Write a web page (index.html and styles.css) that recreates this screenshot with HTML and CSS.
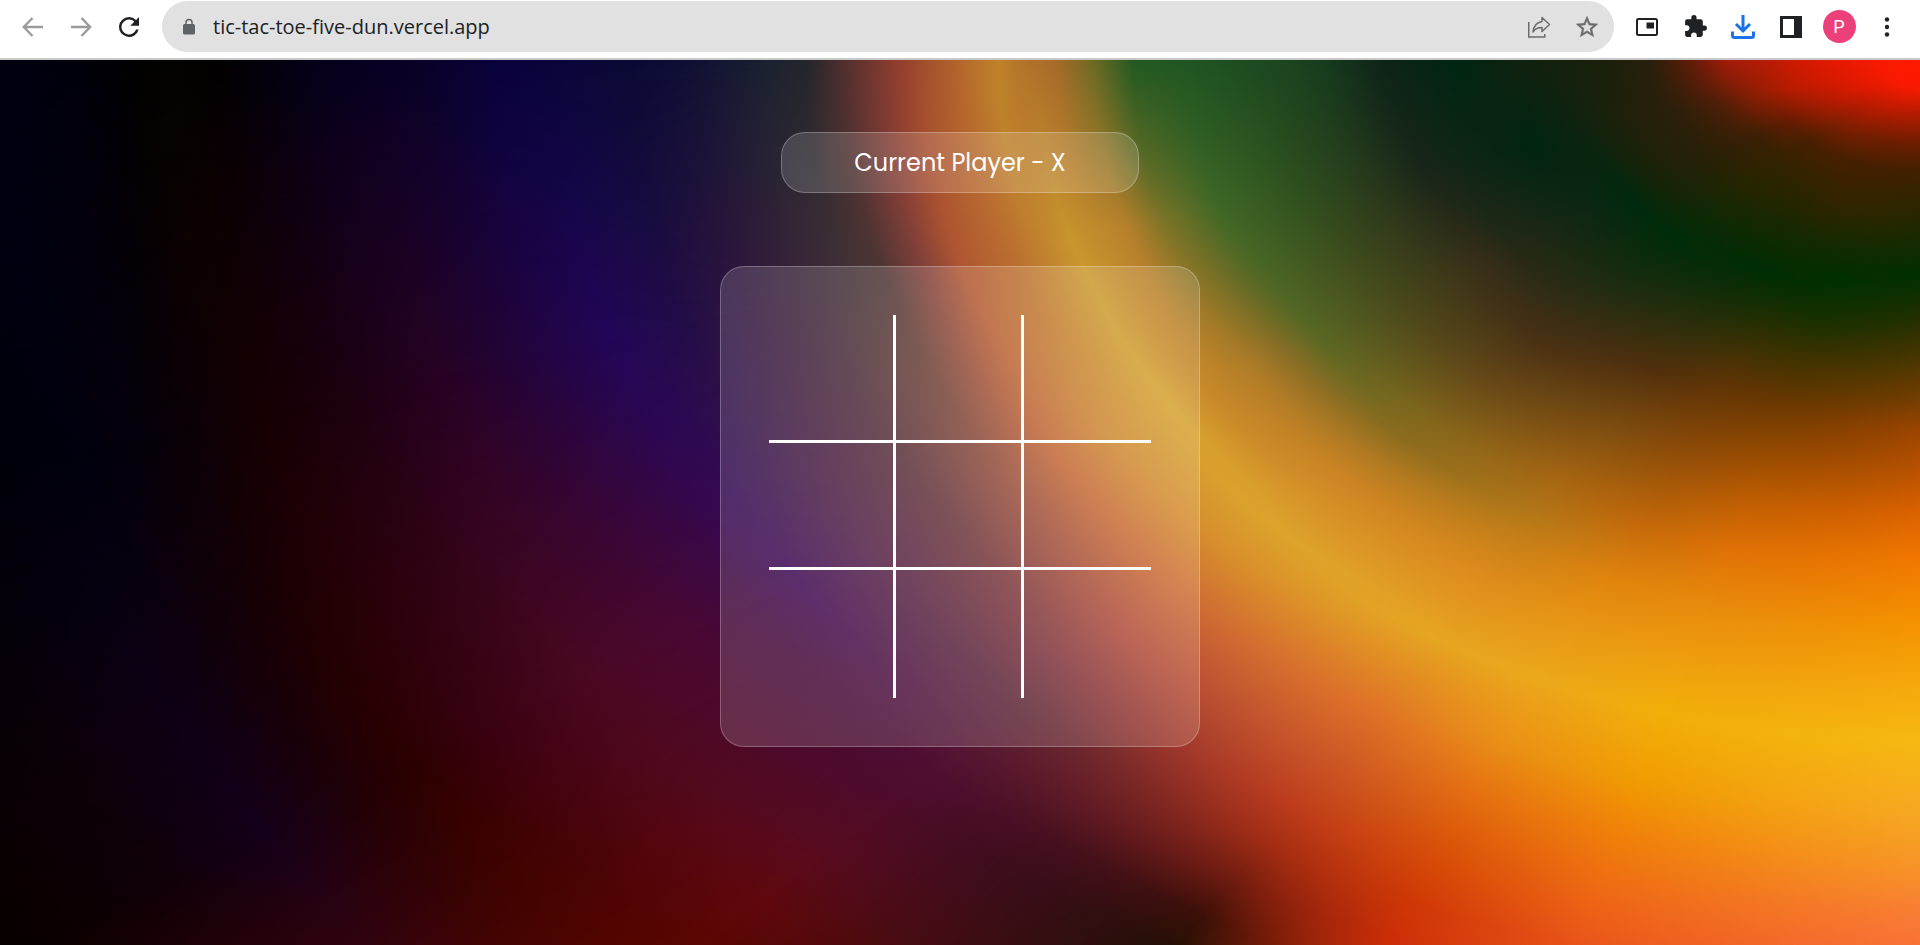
FILE: index.html
```html
<!DOCTYPE html>
<html lang="en">
<head>
<meta charset="utf-8">
<meta name="viewport" content="width=device-width, initial-scale=1">
<title>Tic Tac Toe</title>
<link rel="stylesheet" href="styles.css">
</head>
<body>
<header class="toolbar">
  <nav class="nav-buttons" aria-label="Navigation">
    <button class="tool tool-muted" type="button" aria-label="Back">
      <svg width="24" height="24" viewBox="0 0 24 24" fill="none" stroke="currentColor" stroke-width="2.400"><path d="M22 12H3.500M11.500 3 2.800 12l8.700 9"/></svg>
    </button>
    <button class="tool tool-muted" type="button" aria-label="Forward">
      <svg width="24" height="24" viewBox="0 0 24 24" fill="none" stroke="currentColor" stroke-width="2.400"><path d="M2 12h18.500M12.500 3l8.700 9-8.700 9"/></svg>
    </button>
    <button class="tool" type="button" aria-label="Reload">
      <svg width="30" height="30" viewBox="0 0 24 24" fill="currentColor"><path d="M17.650 6.350A7.960 7.960 0 0 0 12 4a8 8 0 1 0 7.730 10h-2.080A6 6 0 1 1 12 6c1.660 0 3.140.690 4.220 1.780L13 11h7V4z"/></svg>
    </button>
  </nav>
  <div class="address">
    <svg class="lock" width="18" height="18" viewBox="0 0 24 24" fill="currentColor" aria-hidden="true"><path fill-rule="evenodd" d="M18 8h-1V6A5 5 0 0 0 7 6v2H6a2 2 0 0 0-2 2v10c0 1.100.900 2 2 2h12a2 2 0 0 0 2-2V10a2 2 0 0 0-2-2zM8.900 8V6a3.100 3.100 0 0 1 6.200 0v2z"/></svg>
    <input class="url" type="text" value="tic-tac-toe-five-dun.vercel.app" aria-label="Address">
    <button class="tool tool-grey" type="button" aria-label="Share">
      <svg width="24" height="24" viewBox="0 0 24 24" fill="none" stroke="currentColor" stroke-width="1.500"><path d="M1.750 7v15h16v-3"/><path stroke-linejoin="round" d="M15 2.500 22.500 9.500 15 16.500v-4C11 12.300 8 14 6 17c.5-5.500 3.500-9.500 9-10.500z"/></svg>
    </button>
    <button class="tool tool-grey" type="button" aria-label="Bookmark">
      <svg width="26" height="26" viewBox="0 0 24 24" fill="currentColor" stroke="currentColor" stroke-width=".4"><path d="m22 9.240-7.190-.620L12 2 9.190 8.630 2 9.240l5.460 4.730L5.820 21 12 17.270 18.180 21l-1.630-7.030zM12 15.400l-3.760 2.270 1-4.280-3.320-2.880 4.380-.380L12 6.100l1.710 4.040 4.380.380-3.320 2.880 1 4.280z"/></svg>
    </button>
  </div>
  <div class="actions">
    <button class="tool" type="button" aria-label="Picture in picture">
      <svg width="24" height="24" viewBox="0 0 24 24"><rect x="2" y="4" width="20" height="16" rx="1.500" fill="none" stroke="currentColor" stroke-width="2"/><path fill="currentColor" d="M11.500 7.500h7.500v6h-7.500z"/></svg>
    </button>
    <button class="tool" type="button" aria-label="Extensions">
      <svg width="25" height="25" viewBox="0 0 24 24" fill="currentColor"><path d="M20.500 11H19V7a2 2 0 0 0-2-2h-4V3.500a2.500 2.500 0 0 0-5 0V5H4a2 2 0 0 0-1.990 2v3.800H3.500a2.700 2.700 0 0 1 0 5.400H2V20c0 1.100.900 2 2 2h3.800v-1.500a2.700 2.700 0 0 1 5.400 0V22H17a2 2 0 0 0 2-2v-4h1.500a2.500 2.500 0 0 0 0-5z"/></svg>
    </button>
    <button class="tool tool-blue" type="button" aria-label="Downloads">
      <svg width="26" height="26" viewBox="0 0 26 26" fill="none" stroke="currentColor" stroke-width="3"><path d="M13 1v16M6 10l7 7 7-7"/><path d="M2.500 17.500v4a2 2 0 0 0 2 2h17a2 2 0 0 0 2-2v-4"/></svg>
    </button>
    <button class="tool" type="button" aria-label="Side panel">
      <svg width="22" height="22" viewBox="0 0 22 22"><path fill="currentColor" fill-rule="evenodd" d="M0 0h22v22H0zM3 3v16h11V3z"/></svg>
    </button>
    <button class="tool" type="button" aria-label="Profile"><span class="avatar">P</span></button>
    <button class="tool" type="button" aria-label="Menu">
      <svg width="6" height="20" viewBox="0 0 6 20" fill="currentColor"><circle cx="3" cy="2.500" r="2.200"/><circle cx="3" cy="10" r="2.200"/><circle cx="3" cy="17.500" r="2.200"/></svg>
    </button>
  </div>
</header>
<main class="stage">
  <div class="backdrop" aria-hidden="true">
    <div class="glow glow-a"></div>
    <div class="glow glow-b"></div>
    <div class="glow glow-c"></div>
    <div class="glow glow-d"></div>
    <div class="glow glow-e"></div>
    <div class="glow glow-f"></div>
    <div class="glow glow-g"></div>
    <div class="glow glow-h"></div>
  </div>
  <div class="game">
    <p class="status">Current Player - X</p>
    <div class="board">
      <div class="cells">
        <button class="cell" type="button" aria-label="Top left"></button>
        <button class="cell" type="button" aria-label="Top centre"></button>
        <button class="cell" type="button" aria-label="Top right"></button>
        <button class="cell" type="button" aria-label="Middle left"></button>
        <button class="cell" type="button" aria-label="Middle"></button>
        <button class="cell" type="button" aria-label="Middle right"></button>
        <button class="cell" type="button" aria-label="Bottom left"></button>
        <button class="cell" type="button" aria-label="Bottom centre"></button>
        <button class="cell" type="button" aria-label="Bottom right"></button>
      </div>
    </div>
  </div>
</main>
</body>
</html>
```
FILE: styles.css
```css
* {
  box-sizing: border-box;
}

body {
  margin: 0;
  min-height: 100vh;
  display: flex;
  flex-direction: column;
  font-family: "Open Sans", "Noto Sans", sans-serif;
}

button {
  padding: 0;
  border: 0;
  background: none;
  color: inherit;
  font: inherit;
}

/* Browser toolbar */
.toolbar {
  display: flex;
  align-items: flex-start;
  height: 60px;
  padding-top: 1px;
  background: #fff;
  border-bottom: 2px solid #c8c8c8;
  color: #202124;
}

.nav-buttons,
.actions {
  display: flex;
  align-items: center;
  height: 51px;
}

.nav-buttons {
  padding: 0 9px;
}

.actions {
  padding: 0 9px;
}

.tool {
  display: flex;
  align-items: center;
  justify-content: center;
  flex: none;
  width: 48px;
  height: 48px;
}

.tool-muted {
  color: #9b9b9b;
}

.tool-grey {
  color: #6b6c6e;
}

.tool-blue {
  color: #1a73e8;
}

.address {
  display: flex;
  align-items: center;
  flex: 1;
  height: 51px;
  padding: 0 3px 0 18px;
  border-radius: 26px;
  background: #e1e1e1;
}

.lock {
  flex: none;
  margin-right: 15px;
  color: #5f6368;
}

.url {
  flex: 1;
  min-width: 0;
  padding: 0;
  border: 0;
  outline: 0;
  background: none;
  color: #202124;
  font-family: "Open Sans", "Noto Sans", sans-serif;
  font-size: 20px;
  line-height: 28px;
}

.avatar {
  width: 33px;
  height: 33px;
  border-radius: 50%;
  background: #ec407a;
  color: #fff;
  font-family: Roboto, sans-serif;
  font-size: 18px;
  line-height: 33px;
  text-align: center;
}

/* Game */
.stage {
  flex: 1;
  display: grid;
}

.backdrop,
.game {
  grid-area: 1 / 1;
}

.game {
  display: flex;
  flex-direction: column;
  align-items: center;
  gap: 73px;
  padding: 72px 16px;
  z-index: 1;
}

.status {
  width: 358px;
  max-width: 100%;
  margin: 0;
  padding: 12px;
  border: 1px solid rgba(255, 255, 255, 0.25);
  border-radius: 24px;
  background: rgba(255, 255, 255, 0.15);
  color: #fff;
  font-family: Poppins, Inter, sans-serif;
  font-size: 24px;
  line-height: 35px;
  text-align: center;
}

.board {
  width: 480px;
  max-width: 100%;
  padding: 48px;
  border: 1px solid rgba(255, 255, 255, 0.25);
  border-radius: 24px;
  background: rgba(255, 255, 255, 0.15);
}

.cells {
  display: grid;
  grid-template-columns: repeat(3, 1fr);
  grid-auto-rows: 128px 127px 128px;
}

.cell {
  border: 0 solid #fff;
}

.cell:not(:nth-child(3n)) {
  border-right-width: 3px;
}

.cell:nth-child(-n + 6) {
  border-bottom-width: 3px;
}

/* Elliptical glows around the top right corner, each one fading
   into the next as the angle turns from left to down. */
.backdrop {
  display: grid;
  overflow: hidden;
  background: #000;
}

.glow {
  grid-area: 1 / 1;
}

.glow-a {
  background: radial-gradient(100% 160% at 100% 0, #ff1a00 0%, #f81a00 2%, #e81a00 4%, #d41a00 6%, #b81c06 8%, #a41c08 10%, #601c08 12%, #28200c 14%, #1c200c 16%, #10220f 21%, #002512 24%, #0f2418 28%, #163c1e 31%, #1b451f 33%, #205522 38%, #235a22 41%, #6a6a24 43%, #a86a2a 45%, #b4762a 47%, #bf842a 48%, #b5662c 50%, #96402e 53%, #6a3430 55%, #23262c 58%, #1b2230 60%, #0f1034 64%, #0a0a34 67%, #0a0838 69%, #09023c 74%, #0a0228 78%, #06001c 83%, #040004 88%, #040400 91%, #020202 93%, #00000c 96%, #000012 100%);
}

.glow-b {
  background: radial-gradient(100% 160% at 100% 0, #ff1a00 0%, #f81a00 2%, #d41a00 5%, #b81c00 7%, #8a1e04 9%, #4e1e08 11%, #2e200a 13%, #25200a 15%, #0a2410 19%, #002511 21%, #182619 27%, #273a1c 30%, #30521f 34%, #3f6826 38%, #7c7428 41%, #b8802c 43%, #c8962e 46%, #bb7030 49%, #b05632 52%, #80403a 54%, #4e3634 56%, #433137 58%, #34183d 63%, #220d48 67%, #220658 71%, #230334 77%, #270224 80%, #1c0010 85%, #150002 90%, #0a0008 94%, #00000e 100%, #000009 104%);
  mask-image: conic-gradient(at 100% 0, #000 258deg, transparent 270deg);
}

.glow-c {
  background: radial-gradient(100% 160% at 100% 0, #ff1a00 0%, #f81a00 2%, #d81a00 4%, #a41c00 6%, #681c02 8%, #3c2004 10%, #2e2006 12%, #182308 16%, #002a0e 18%, #0c2712 20%, #262917 25%, #382f18 27%, #49481b 32%, #5a6824 37%, #8a6e26 39%, #b07c28 41%, #c88a2a 44%, #d6a22f 46%, #ce8834 50%, #c36837 53%, #994e3b 56%, #65343b 60%, #521f47 65%, #400a54 69%, #42093f 72%, #4a0832 76%, #4a0822 82%, #3a0212 88%, #2c0000 93%, #1e0008 97%, #14001a 102%, #10000a 108%, #0a0000 115%, #050000 120%);
  mask-image: conic-gradient(at 100% 0, #000 245deg, transparent 258deg);
}

.glow-d {
  background: radial-gradient(100% 160% at 100% 0, #ff1a00 0%, #f81a00 2%, #c41a00 4%, #881e00 6%, #4a2000 8%, #342200 10%, #2a2500 12%, #0c2a06 16%, #002c0a 18%, #1a2c10 22%, #3a2e14 26%, #483014 28%, #654818 32%, #82661c 36%, #8c6c1e 38%, #b07a22 40%, #cc8424 42%, #d8962a 45%, #dca42c 47%, #d9902c 50%, #cc6a35 54%, #b04b3b 58%, #82343b 62%, #602837 65%, #5a1c34 68%, #500e30 72%, #4e0c2a 75%, #580b1e 80%, #60080c 85%, #5a0600 90%);
  mask-image: conic-gradient(at 100% 0, #000 234deg, transparent 245deg);
}

.glow-e {
  background: radial-gradient(100% 160% at 100% 0, #ff1a00 0%, #f81a00 2%, #b81c00 4%, #7a1e00 6%, #482000 8%, #352300 10%, #152900 14%, #002d04 17%, #182d08 20%, #40300c 24%, #54300c 26%, #784a10 30%, #a86612 35%, #b67818 38%, #c88018 40%, #de8c1c 43%, #e49a20 46%, #e6a622 48%, #e49422 50%, #df7228 54%, #cc5826 58%, #be3c1c 62%, #a02c14 65%, #701c10 68%, #3c1008 71%, #241005 74%);
  mask-image: conic-gradient(at 100% 0, #000 220deg, transparent 234deg);
}

.glow-f {
  background: radial-gradient(100% 160% at 100% 0, #ff1a00 0%, #f81a00 2%, #b41c00 4%, #721e00 6%, #442000 8%, #322400 11%, #142a00 14%, #002e02 17%, #222f02 20%, #603406 25%, #8c4a08 30%, #c46a0a 36%, #d2780e 38%, #e0840e 40%, #e89814 44%, #eca81a 48%, #ea9016 53%, #e56e10 57%, #d85208 61%, #d03806 65%, #cc2e08 68%);
  mask-image: conic-gradient(at 100% 0, #000 211deg, transparent 220deg);
}

.glow-g {
  background: radial-gradient(100% 160% at 100% 0, #ff1a00 0%, #f81a00 2%, #b01c00 4%, #6c1e00 6%, #422000 8%, #2e2600 11%, #122b00 14%, #003000 16%, #183000 19%, #403300 22%, #683800 25%, #8c4600 28%, #bc5c02 32%, #e07206 36%, #e88a0c 40%, #ee9e0e 44%, #f2b008 48%, #f09c02 53%, #f0800a 57%, #ee6a14 61%, #ea541a 65%);
  mask-image: conic-gradient(at 100% 0, #000 201deg, transparent 211deg);
}

.glow-h {
  background: radial-gradient(100% 160% at 100% 0, #ff1a00 0%, #f81a00 2%, #ac1c00 4%, #6a1e00 6%, #3e2200 8%, #282600 11%, #0c2d00 14%, #003000 15%, #202f00 18%, #483600 21%, #743e00 24%, #9a4400 26%, #b85200 29%, #dc6200 32%, #f07600 35%, #f49400 40%, #f5a80c 44%, #f6b812 48%, #f6a822 53%, #f79428 57%, #f87e34 60%, #f87038 63%);
  mask-image: conic-gradient(at 100% 0, #000 180deg, transparent 201deg);
}
```
